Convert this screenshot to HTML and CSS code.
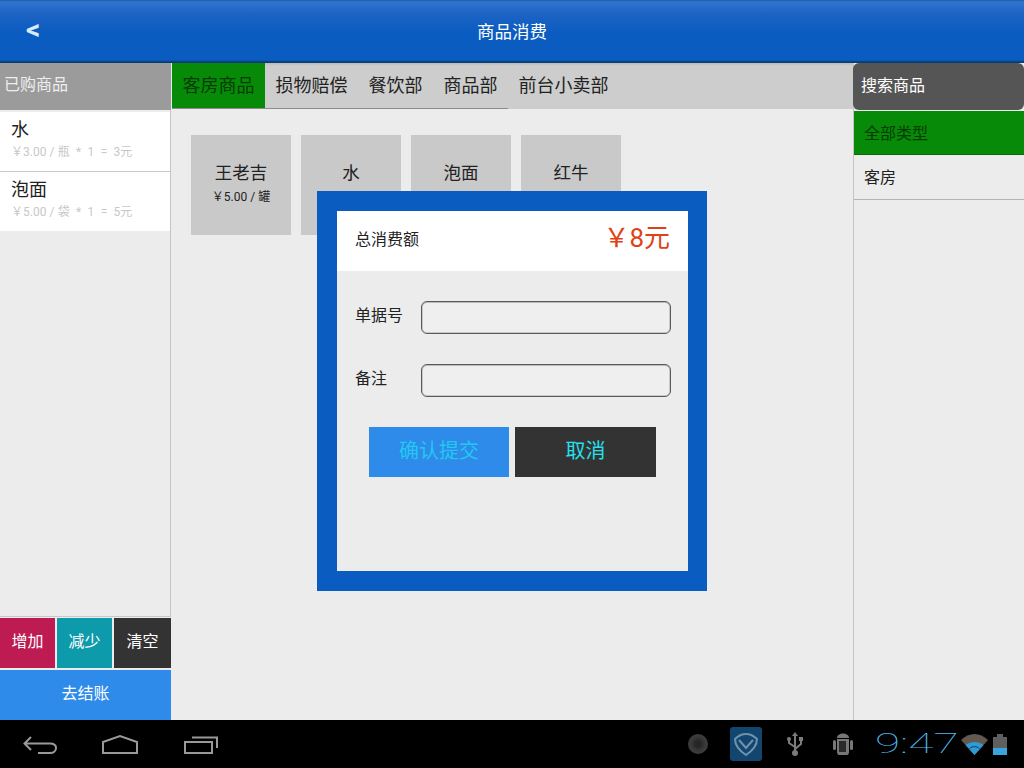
FILE: index.html
```html
<!DOCTYPE html>
<html lang="zh-CN">
<head>
    <title>商品消费</title>
    <meta charset="UTF-8" />
    <link rel="stylesheet" href="styles.css">
</head>
<body>
    <div class="screen">
        <header class="topbar">
            <span class="back">&lt;</span>
            <span class="topbar-title">商品消费</span>
        </header>

        <div class="content">
            <aside class="cart">
                <div class="cart-title">已购商品</div>
                <div class="cart-list">
                    <div class="cart-item">
                        <div class="cart-name">水</div>
                        <div class="cart-info">￥3.00 / 瓶 &nbsp;* &nbsp;1 &nbsp;= &nbsp;3元</div>
                    </div>
                    <div class="cart-item">
                        <div class="cart-name">泡面</div>
                        <div class="cart-info">￥5.00 / 袋 &nbsp;* &nbsp;1 &nbsp;= &nbsp;5元</div>
                    </div>
                </div>
                <div class="cart-actions">
                    <button class="act act-add">增加</button>
                    <button class="act act-less">减少</button>
                    <button class="act act-clear">清空</button>
                </div>
                <button class="checkout">去结账</button>
            </aside>

            <main class="goods">
                <nav class="tabs">
                    <span class="tab tab-on">客房商品</span>
                    <span class="tab">损物赔偿</span>
                    <span class="tab">餐饮部</span>
                    <span class="tab">商品部</span>
                    <span class="tab tab-last">前台小卖部</span>
                </nav>
                <div class="goods-grid">
                    <div class="good"><div class="good-name">王老吉</div><div class="good-price">￥5.00 / 罐</div></div>
                    <div class="good"><div class="good-name">水</div></div>
                    <div class="good"><div class="good-name">泡面</div></div>
                    <div class="good"><div class="good-name">红牛</div></div>
                </div>
            </main>

            <aside class="search">
                <div class="search-title">搜索商品</div>
                <div class="type type-on">全部类型</div>
                <div class="type">客房</div>
            </aside>
        </div>

        <footer class="navbar">
            <div class="nav-keys">
                <svg width="36" height="20" viewBox="0 0 36 20"><path d="M8 3 1.500 9.500 8 16M2 9.500h25c4 0 6 2 6 4.500s-2 5-6 5H15" fill="none" stroke="#999" stroke-width="2"/></svg>
                <svg width="38" height="20" viewBox="0 0 38 20"><path d="M2 8 19 2l17 6v11H2z" fill="none" stroke="#999" stroke-width="2"/></svg>
                <svg class="key-recent" width="36" height="20" viewBox="0 0 36 20"><path d="M2 8h27v11H2zM9 3.500h25V14" fill="none" stroke="#999" stroke-width="2"/></svg>
            </div>
            <div class="nav-status">
                <span class="st-dot"></span>
                <span class="st-app">
                    <svg width="26" height="26" viewBox="0 0 26 26"><path d="M2 8c3-3 7-5 11-5s8 2 11 5c0 7-5 12-11 16C7 20 2 15 2 8z" fill="none" stroke="#6f93ad" stroke-width="2"/><path d="M6 9l7 8 7-8" fill="none" stroke="#6f93ad" stroke-width="2"/></svg>
                </span>
                <svg class="st-usb" width="16" height="24" viewBox="0 0 16 24"><path d="M8 3v17M8 15 2 11V8M8 17l6-5V8" fill="none" stroke="#7c7c7c" stroke-width="2"/><path d="M8 0l3 4H5z" fill="#7c7c7c"/><circle cx="2" cy="7" r="2" fill="#7c7c7c"/><rect x="12" y="5" width="4" height="4" fill="#7c7c7c"/><circle cx="8" cy="21" r="3" fill="#7c7c7c"/></svg>
                <svg class="st-droid" width="20" height="24" viewBox="0 0 20 24"><path d="M4 6c0-6 12-6 12 0z" fill="#777"/><path d="M4 7h12v13c0 2-1 3-2 3H6c-1 0-2-1-2-3z" fill="#777"/><rect x="0" y="8" width="3" height="10" rx="1.500" fill="#777"/><rect x="17" y="8" width="3" height="10" rx="1.500" fill="#777"/><rect x="6" y="9" width="7" height="11" fill="#2a2a2a"/></svg>
                <span class="clock"><span class="clock-text">9:47</span></span>
                <svg class="st-wifi" width="27" height="21" viewBox="0 0 27 21"><path d="M0 6c8-8 19-8 27 0L13.500 21z" fill="#63594f"/><path d="M4.500 11c5.500-4 12.500-4 18 0L13.500 21z" fill="#2f9bd6"/><path d="M8.500 14.500c3-2.500 7-2.500 10 0" fill="none" stroke="#0d3a55" stroke-width="1"/></svg>
                <svg class="st-batt" width="14" height="21" viewBox="0 0 14 21"><rect x="4" y="0" width="6" height="3" fill="#5f5f5f"/><rect x="0" y="3" width="14" height="18" fill="#5f5f5f"/><rect x="0" y="14" width="14" height="7" fill="#39a4dd"/></svg>
            </div>
        </footer>

        <div class="dialog">
            <div class="dialog-total">
                <span class="total-label">总消费额</span>
                <span class="total-value">￥8元</span>
            </div>
            <div class="dialog-form">
                <label class="field"><span class="field-label">单据号</span><input class="field-input" type="text"></label>
                <label class="field"><span class="field-label">备注</span><input class="field-input" type="text"></label>
                <div class="dialog-btns">
                    <button class="btn btn-ok">确认提交</button>
                    <button class="btn btn-cancel">取消</button>
                </div>
            </div>
        </div>
    </div>
</body>
</html>
```

FILE: styles.css
```css
* {
    box-sizing: border-box;
}
html, body {
    margin: 0;
    padding: 0;
}
body {
    font-family: "Roboto", "Noto Sans CJK SC", sans-serif;
    color: #222;
    background: #ececec;
}
button {
    font-family: inherit;
    border: 0;
    padding: 0;
}
.screen {
    position: relative;
    width: 1024px;
    height: 768px;
    overflow: hidden;
    display: flex;
    flex-direction: column;
}

/* top bar */
.topbar {
    height: 63px;
    flex: none;
    padding-bottom: 3px;
    display: flex;
    align-items: center;
    justify-content: center;
    position: relative;
    color: #fff;
    background: linear-gradient(#1d5c9e 0, #2f74cf 2px, #1c63c4 14px, #0b5cc1 32px, #0b5cc1 60px, #083c78 62px);
}
.topbar-title {
    font-size: 17.5px;
}
.back {
    position: absolute;
    left: 26px;
    top: 13px;
    font-size: 28px;
    font-weight: 700;
    line-height: 34px;
    color: #d8ecff;
}

/* main area */
.content {
    flex: 1;
    min-height: 0;
    display: flex;
}
.cart {
    width: 171px;
    flex: none;
    display: flex;
    flex-direction: column;
}
.cart-title {
    height: 47px;
    padding-left: 4px;
    line-height: 44px;
    font-size: 16px;
    color: #eee;
    background: #9b9b9b;
}
.cart-list {
    flex: 1;
    padding-top: 2px;
    border-right: 1px solid #c4c4c4;
    border-bottom: 1px solid #c8c8c8;
}
.cart-item {
    height: 60px;
    padding: 6px 0 0 11px;
    background: #fff;
    border-bottom: 1px solid #c8c8c8;
}
.cart-item:last-child {
    height: 59px;
    border-bottom: 0;
}
.cart-name {
    font-size: 18px;
    line-height: 24px;
    color: #222;
}
.cart-info {
    font-size: 12px;
    line-height: 20px;
    word-spacing: 0.2px;
    color: #c8c8c8;
}
.cart-actions {
    display: flex;
    gap: 2px;
    height: 50px;
    margin-top: 1px;
}
.act {
    flex: 1;
    padding-bottom: 6px;
    font-size: 16px;
    color: #fff;
}
.act-clear {
    flex: 0 0 57px;
    background: #333;
}
.act-add {
    background: #bd1b52;
}
.act-less {
    background: #0d9aab;
}
.checkout {
    height: 50px;
    margin-top: 2px;
    padding-bottom: 6px;
    font-size: 16px;
    color: #fff;
    background: #2e8bea;
}

/* goods */
.goods {
    width: 683px;
    flex: none;
    border-right: 1px solid #c4c4c4;
}
.tabs {
    height: 46px;
    margin-left: 1px;
    display: flex;
    background: linear-gradient(#bcbcbc, #cdcdcd 3px);
}
.tab {
    padding: 0 10.5px;
    font-size: 18px;
    line-height: 46px;
    color: #222;
    border-bottom: 1px solid #8c8c8c;
}
.tab-last {
    border-bottom: 0;
}
.tab-on {
    color: #053c05;
    background: #078a07;
}
.goods-grid {
    display: flex;
    gap: 10px;
    padding: 26px 0 0 20px;
}
.good {
    width: 100px;
    height: 100px;
    padding-top: 26px;
    text-align: center;
    background: #c9c9c9;
}
.good-name {
    font-size: 17.5px;
    line-height: 24px;
}
.good-price {
    font-size: 12px;
    line-height: 24px;
}

/* search column */
.search {
    width: 170px;
    flex: none;
}
.search-title {
    height: 47px;
    margin-left: -1px;
    padding-left: 8px;
    line-height: 46px;
    font-size: 16px;
    color: #fff;
    background: #555;
    border-radius: 6px;
}
.type {
    height: 45px;
    padding-left: 10px;
    font-size: 16px;
    line-height: 46px;
    border-bottom: 1px solid #b4b4b4;
}
.type-on {
    height: 44px;
    margin-top: 1px;
    line-height: 45px;
    color: #053c05;
    background: #078a07;
    border-bottom-color: #066a06;
}

/* dialog */
.dialog {
    position: absolute;
    left: 317px;
    top: 191px;
    width: 390px;
    height: 400px;
    border: 20px solid #0b5cc1;
    border-right-width: 19px;
    background: #ececec;
}
.dialog-total {
    height: 60px;
    padding: 0 18px 6px;
    display: flex;
    align-items: center;
    justify-content: space-between;
    background: #fff;
}
.total-label {
    font-size: 16px;
}
.total-value {
    font-size: 26px;
    line-height: 36px;
    margin-top: -1px;
    color: #df4214;
}
.dialog-form {
    padding: 30px 17px 0 18px;
}
.field {
    display: flex;
    align-items: center;
    height: 33px;
    margin-bottom: 30px;
}
.field-label {
    width: 66px;
    flex: none;
    font-size: 16px;
    position: relative;
    top: -4px;
}
.field-input {
    flex: 1;
    min-width: 0;
    height: 33px;
    border: 1px solid #5a5a5a;
    border-radius: 6px;
    background: #efefef;
    box-shadow: inset 0 1px 0 #bbb, inset 0 0 0 1px #c8c8c8;
}
.dialog-btns {
    display: flex;
    gap: 6px;
    padding-left: 14px;
}
.btn {
    height: 50px;
    width: 141px;
    padding-bottom: 5px;
    font-size: 20px;
    color: #26e0ee;
}
.btn-ok {
    width: 140px;
    color: #22c8f2;
    background: #2e8bea;
}
.btn-cancel {
    background: #333;
}

/* android nav bar */
.navbar {
    height: 48px;
    flex: none;
    display: flex;
    align-items: center;
    justify-content: space-between;
    background: #000;
}
.nav-keys {
    display: flex;
    gap: 42px;
    padding-left: 23px;
}
.key-recent {
    margin-left: 2px;
}
.nav-status {
    display: flex;
    align-items: center;
    padding-right: 17px;
}
.st-dot {
    width: 20px;
    height: 20px;
    margin-right: 22px;
    border-radius: 50%;
    background: radial-gradient(circle, #262626 0 3px, #363636 6px, #3e3e3e 10px);
}
.st-app {
    width: 32px;
    height: 34px;
    display: flex;
    align-items: center;
    justify-content: center;
    border-radius: 3px;
    background: #12466f;
    margin-right: 25px;
}
.st-usb {
    margin-right: 30px;
}
.st-droid {
    margin-right: 22px;
}
.clock {
    width: 82px;
    margin-right: 4px;
    font-family: "Roboto", sans-serif;
    font-weight: 100;
    font-size: 27px;
    line-height: 40px;
    color: #4fb8ee;
}
.clock-text {
    display: inline-block;
    transform: scaleX(1.7);
    transform-origin: left center;
}
.st-wifi {
    margin-right: 5px;
}
```
